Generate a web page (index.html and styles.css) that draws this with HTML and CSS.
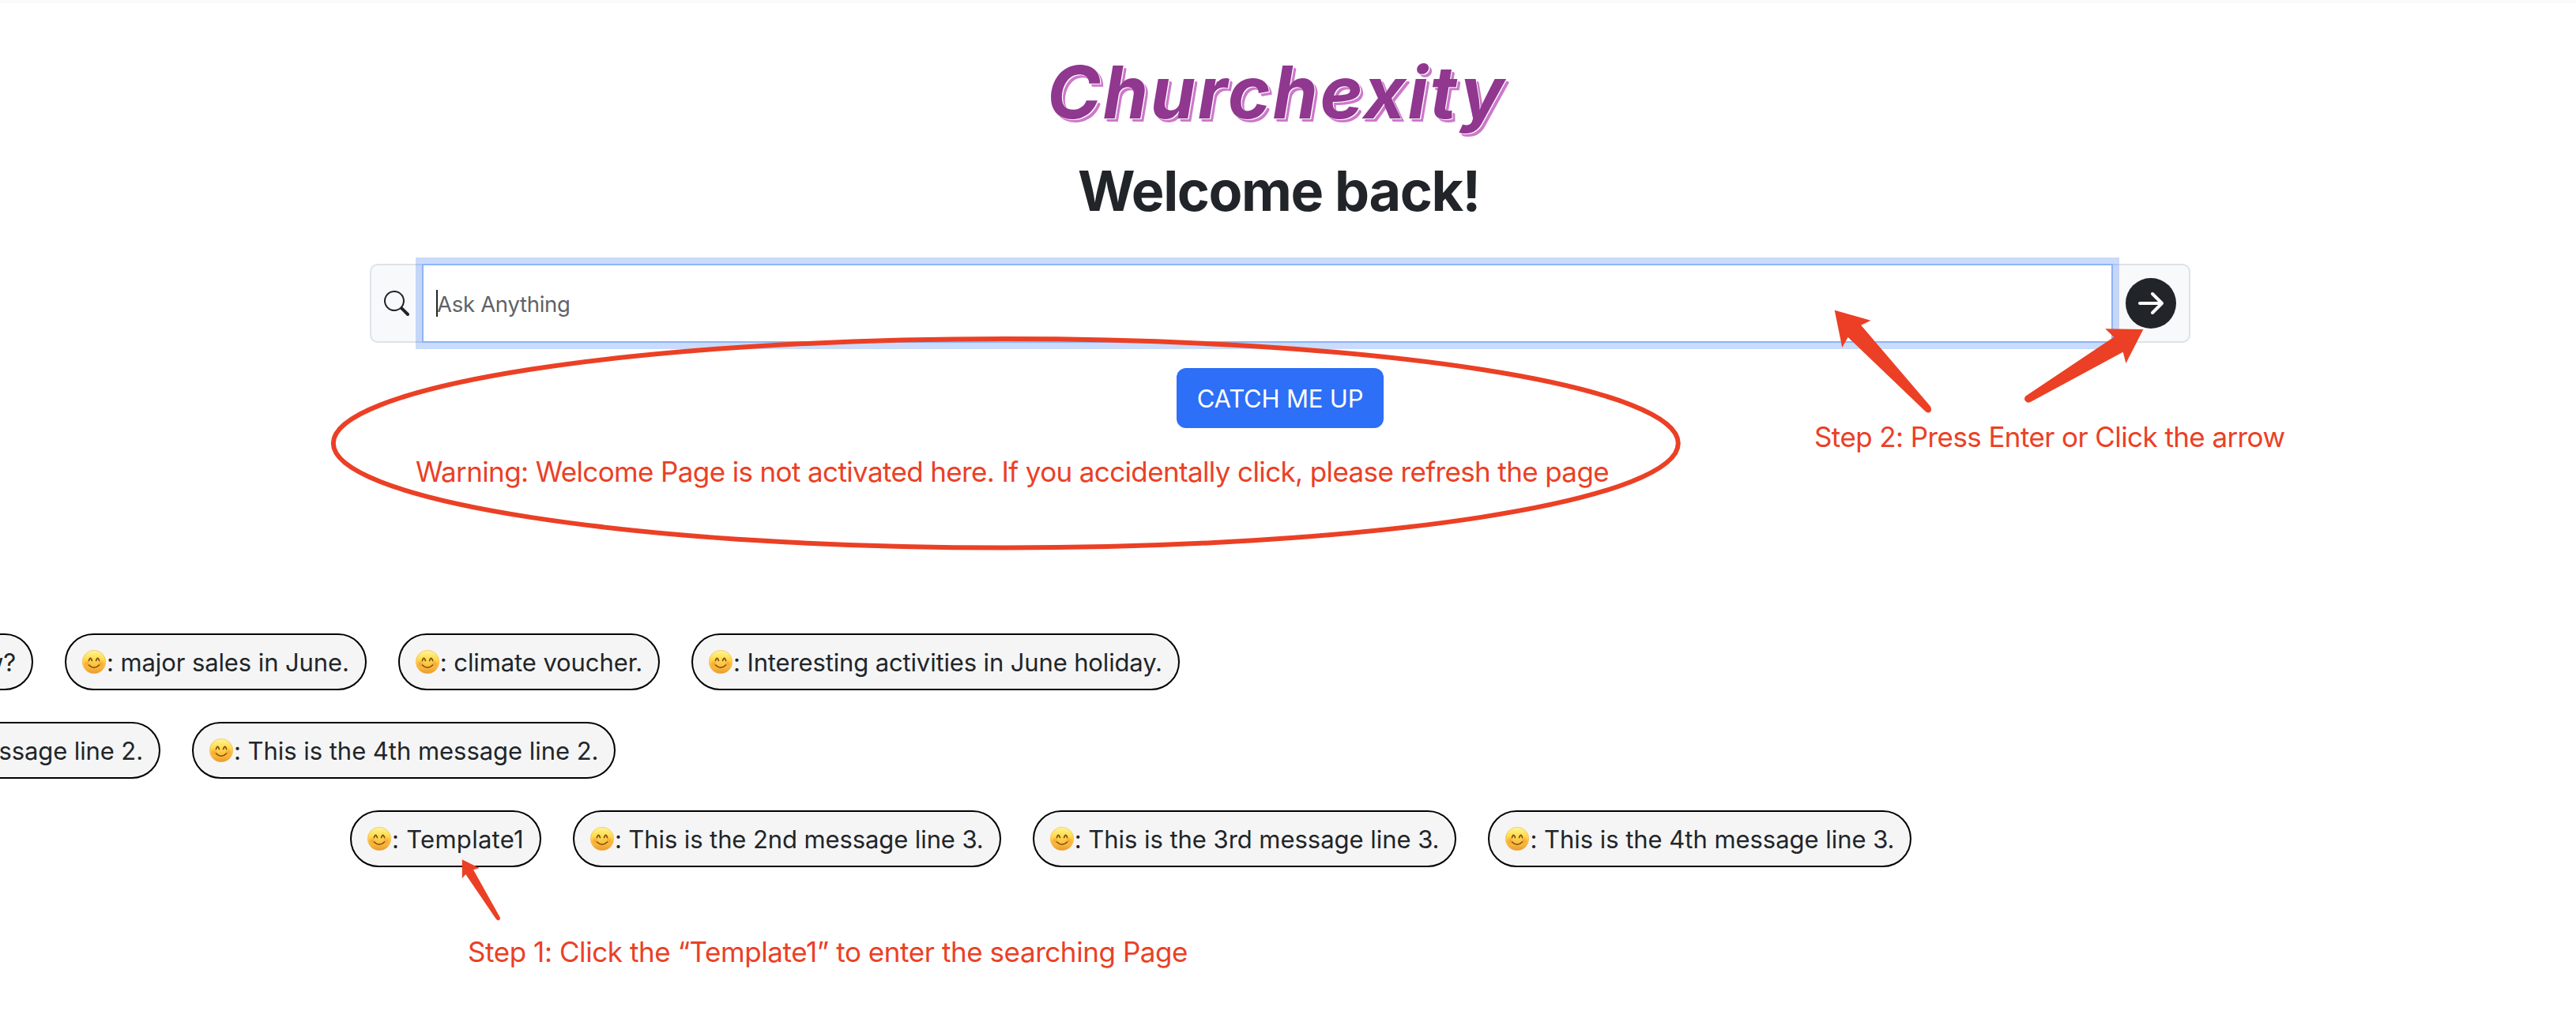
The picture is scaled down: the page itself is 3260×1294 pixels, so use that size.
FILE: index.html
```
<!DOCTYPE html>
<html lang="en">
<head>
<meta charset="utf-8">
<title>Churchexity</title>
<link rel="stylesheet" href="styles.css">
</head>
<body>
<svg class="defs" width="0" height="0" aria-hidden="true">
  <defs>
    <linearGradient id="skin" x1="0" y1="0" x2="0" y2="1">
      <stop offset="0" stop-color="#fff59a"/>
      <stop offset=".3" stop-color="#ffe25a"/>
      <stop offset=".65" stop-color="#fcc23f"/>
      <stop offset="1" stop-color="#ec9a2c"/>
    </linearGradient>
    <radialGradient id="blush">
      <stop offset="0" stop-color="#f58a2a" stop-opacity=".6"/>
      <stop offset="1" stop-color="#f58a2a" stop-opacity="0"/>
    </radialGradient>
    <symbol id="smile" viewBox="0 0 30 30">
      <circle cx="15" cy="15" r="14.7" fill="url(#skin)" stroke="#e9a640" stroke-width=".5"/>
      <circle cx="6" cy="17.5" r="5" fill="url(#blush)"/>
      <circle cx="24" cy="17.5" r="5" fill="url(#blush)"/>
      <path d="M8.4 13.6Q10.4 7.2 12.4 13.6M17.6 13.6Q19.6 7.2 21.6 13.6" fill="none" stroke="#7a4a12" stroke-width="1.6" stroke-linecap="round"/>
      <path d="M8.4 19Q15 25.6 21.6 19" fill="none" stroke="#7a4a12" stroke-width="1.5" stroke-linecap="round"/>
    </symbol>
  </defs>
</svg>

<main class="page">
  <h1 class="logo">Churchexity</h1>
  <h2 class="welcome">Welcome back!</h2>

  <form class="search">
    <span class="addon addon-start">
      <svg width="32" height="32" viewBox="0 0 16 16" fill="currentColor"><path d="M11.742 10.344a6.5 6.5 0 1 0-1.397 1.398h-.001c.03.04.062.078.098.115l3.85 3.85a1 1 0 0 0 1.415-1.414l-3.85-3.85a1.007 1.007 0 0 0-.115-.1zM12 6.5a5.5 5.5 0 1 1-11 0 5.5 5.5 0 0 1 11 0z"/></svg>
    </span>
    <div class="field"><span class="caret"></span><span class="placeholder">Ask Anything</span></div>
    <span class="addon addon-end">
      <svg width="64" height="64" viewBox="0 0 16 16" fill="currentColor"><circle cx="8" cy="8" r="8"/><path d="M4.5 8H11.2M8.5 5L11.5 8L8.5 11" fill="none" stroke="#fff" stroke-width="1" stroke-linecap="round" stroke-linejoin="round"/></svg>
    </span>
  </form>

  <button class="catch-up" type="button">CATCH ME UP</button>

  <section class="messages">
    <div class="row row-1">
      <div class="pill pill-cut">w?</div>
      <div class="pill"><svg class="emoji"><use href="#smile"/></svg>: major sales in June.</div>
      <div class="pill"><svg class="emoji"><use href="#smile"/></svg>: climate voucher.</div>
      <div class="pill tight"><svg class="emoji"><use href="#smile"/></svg>: Interesting activities in June holiday.</div>
    </div>
    <div class="row row-2">
      <div class="pill pill-cut">ssage line 2.</div>
      <div class="pill loose"><svg class="emoji"><use href="#smile"/></svg>: This is the 4th message line 2.</div>
    </div>
    <div class="row row-3">
      <div class="pill wide"><svg class="emoji"><use href="#smile"/></svg>: Template1</div>
      <div class="pill"><svg class="emoji"><use href="#smile"/></svg>: This is the 2nd message line 3.</div>
      <div class="pill loose"><svg class="emoji"><use href="#smile"/></svg>: This is the 3rd message line 3.</div>
      <div class="pill loose"><svg class="emoji"><use href="#smile"/></svg>: This is the 4th message line 3.</div>
    </div>
  </section>
</main>

<!-- Tutorial annotations drawn over the page -->
<svg class="marks" viewBox="0 0 3260 1294" fill="#eb4025">
  <ellipse cx="1272.8" cy="561.3" rx="851" ry="132.3" fill="none" stroke="#eb4025" stroke-width="6"/>
  <path d="M2321.7 392.7L2367.6 405.7L2355.2 411.7L2443 514.5Q2445 519 2443 521.5Q2440.5 524 2436.5 520.7L2338.7 427L2331.3 440Z"/>
  <path d="M2712.4 417L2664.2 416.3L2675.2 426.7L2563.5 501.5Q2560.5 505 2563.5 508Q2566 511 2569.6 509L2686.7 445.7L2690.4 460Z"/>
  <path d="M584.8 1088.3L606.6 1099L599.1 1101.3L632.8 1161.5Q633.5 1164 631.5 1165Q629.5 1166 627.2 1162.7L589.3 1107L584.8 1112.3Z"/>
</svg>
<p class="note note-warning">Warning: Welcome Page is not activated here. If you accidentally click, please refresh the page</p>
<p class="note note-step2">Step 2: Press Enter or Click the arrow</p>
<p class="note note-step1">Step 1: Click the “Template1” to enter the searching Page</p>
</body>
</html>
```
FILE: styles.css
```
* { box-sizing: border-box; }

body {
  position: relative;
  margin: 0;
  width: 3260px;
  height: 1294px;
  overflow: hidden;
  background: #fff;
  color: #212529;
  font-family: Inter, "Liberation Sans", sans-serif;
}

.defs { position: absolute; }

.page {
  display: flex;
  flex-direction: column;
  align-items: center;
  height: 1294px;
  padding: 63px 20px 0 0;
  border-top: 4px solid #fafafa;
}

.logo {
  margin: 0;
  padding-right: 9px;
  font-size: 92px;
  line-height: 100px;
  font-weight: 700;
  font-style: italic;
  letter-spacing: 2.7px;
  color: #90378f;
  text-shadow: 1.2px 1.2px 0 #fff, 4px 4px 0 #cd78cb, 3px 3px 0 #cd78cb;
}

.welcome {
  margin: 33px 3px 50px 0;
  font-size: 70px;
  line-height: 84px;
  font-weight: 700;
  letter-spacing: -1.4px;
}

.search {
  display: flex;
  width: 2304px;
  height: 100px;
}

.addon {
  display: flex;
  align-items: center;
  background: #f8f9fa;
  border: 2px solid #dee2e6;
}

.addon-start {
  width: 66px;
  padding-left: 16px;
  border-right: 0;
  border-radius: 10px 0 0 10px;
}

.addon-end {
  width: 98px;
  padding-left: 16px;
  border-left: 0;
  border-radius: 0 10px 10px 0;
}

.addon svg { flex: none; }

.field {
  z-index: 1;
  display: flex;
  flex: 1;
  align-items: center;
  padding-left: 16px;
  border: 2px solid #8cb4f8;
  background: #fff;
  box-shadow: 0 0 0 8px rgba(44, 110, 240, .25);
}

.caret {
  width: 2px;
  height: 34px;
  background: #212529;
}

.placeholder {
  margin-left: -1px;
  padding-top: 1px;
  font-size: 27.5px;
  letter-spacing: -.29px;
  color: #5f6367;
}

.catch-up {
  width: 262px;
  height: 76px;
  margin-top: 32px;
  padding: 0;
  border: 0;
  border-radius: 12px;
  background: #2d6ff6;
  color: #fff;
  font: 400 31px Inter, "Liberation Sans", sans-serif;
  letter-spacing: -.17px;
}

.messages {
  display: flex;
  flex-direction: column;
  align-self: flex-start;
  gap: 40px;
  margin-top: 260px;
}

.row {
  display: flex;
  gap: 40px;
}

.row-1 { margin-left: -258px; }
.row-2 { margin-left: -97px; }
.row-3 { margin-left: 443px; }

.pill {
  display: flex;
  align-items: center;
  height: 72px;
  padding: 0 20px;
  border: 2px solid #000;
  border-radius: 36px;
  background: #f5f5f5;
  font-size: 31px;
  letter-spacing: -.1px;
  white-space: nowrap;
}

.pill-cut {
  width: 300px;
  justify-content: flex-end;
}

.pill.tight { letter-spacing: -.14px; }
.pill.wide { letter-spacing: .28px; }
.pill.loose { letter-spacing: -.04px; }

.emoji {
  flex: none;
  width: 30px;
  height: 30px;
  margin-right: 1px;
}

.marks {
  position: absolute;
  inset: 0;
  z-index: 2;
  width: 3260px;
  height: 1294px;
  pointer-events: none;
}

.note {
  position: absolute;
  z-index: 3;
  margin: 0;
  font-size: 35px;
  line-height: 42px;
  letter-spacing: -.63px;
  color: #eb4025;
  white-space: nowrap;
}

.note-warning { left: 526px; top: 576px; }
.note-step2 { left: 2296px; top: 532px; letter-spacing: -.59px; }
.note-step1 { left: 592px; top: 1184px; letter-spacing: -.43px; }
```
